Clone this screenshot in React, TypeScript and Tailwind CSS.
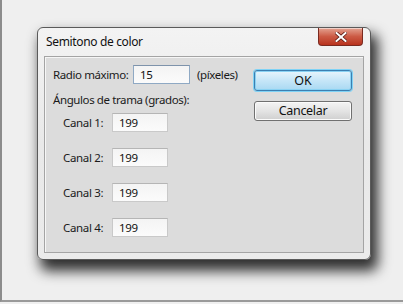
const font = "font-['Segoe_UI','Noto_Sans',sans-serif]"

function Field({ value, focused }: { value: string; focused?: boolean }) {
  return (
    <div
      className={
        'flex h-[19px] items-center border bg-gradient-to-b from-[#f4f4f4] to-[#fbfbfb] pl-[6px] text-[11.5px] leading-[16px] tracking-[-0.3px] text-[#111] ' +
        (focused ? 'border-[#8fa9c4] border-t-[#7e93ab]' : 'border-[#c9c9c9] border-t-[#b5b5b5]')
      }
    >
      {value}
    </div>
  )
}

function Channel({ n }: { n: number }) {
  return (
    <div className="flex h-[19px] items-center">
      <span className="w-[67px] shrink-0 whitespace-nowrap pl-[18px] text-[11.5px] leading-[16px] tracking-[-0.35px] text-[#1a1a1a]">Canal {n}:</span>
      <div className="w-[56px] shrink-0">
        <Field value="199" />
      </div>
    </div>
  )
}

export default function App() {
  return (
    <div className={'h-[304px] w-[403px] overflow-hidden bg-[#f0f0f0] ' + font}>
      <div className="flex h-[302px] border-l-[2px] border-b-[2px] border-l-[#8c8c8c] border-b-[#9a9a9a] bg-[#efefef] pl-[35px] pt-[27px]">
        {/* ventana del diálogo */}
        <div className="flex h-[233px] w-[334px] flex-col rounded-[6px] border border-[#5a5a5a] bg-gradient-to-b from-[#f3f3f3] via-[#e9e9e9] to-[#ebebeb] px-[6px] pb-[6px] shadow-[5px_9px_13px_2px_rgba(0,0,0,0.8)]">
          <div className="flex h-[28px] shrink-0 items-start justify-between">
            <span className="whitespace-nowrap pl-[2px] pt-[6px] text-[12px] leading-[16px] tracking-[-0.35px] text-[#111]">Semitono de color</span>
            <div className="mr-[1px] flex h-[18px] w-[45px] items-center justify-center rounded-b-[4px] border border-t-0 border-[#7a2a20] bg-gradient-to-b from-[#e3a291] via-[#cc5a44] to-[#b8321d] shadow-[inset_0_1px_0_rgba(255,255,255,0.5)]">
              <svg width="12" height="10" viewBox="0 0 12 10">
                <path d="M1.5 1 L10.5 9 M10.5 1 L1.5 9" stroke="#5a1a12" strokeWidth="3.6" strokeLinecap="square" />
                <path d="M1.5 1 L10.5 9 M10.5 1 L1.5 9" stroke="#ffffff" strokeWidth="2" strokeLinecap="square" />
              </svg>
            </div>
          </div>
          {/* área cliente */}
          <div className="flex min-h-0 flex-1 border border-[#a4a4a4] bg-[#dcdcdc] shadow-[inset_1px_1px_0_#f6f6f6]">
            <div className="flex w-[208px] shrink-0 flex-col pt-[8px]">
              <div className="flex h-[19px] items-center">
                <span className="w-[88px] shrink-0 whitespace-nowrap pl-[8px] text-[11.5px] leading-[16px] tracking-[-0.4px] text-[#1a1a1a]">Radio máximo:</span>
                <div className="w-[57px] shrink-0">
                  <Field value="15" focused />
                </div>
                <span className="whitespace-nowrap pl-[7px] text-[11.5px] leading-[16px] tracking-[-0.4px] text-[#1a1a1a]">(píxeles)</span>
              </div>
              <div className="mt-[8px] h-[16px] whitespace-nowrap pl-[8px] text-[11.5px] leading-[16px] tracking-[-0.4px] text-[#1a1a1a]">Ángulos de trama (grados):</div>
              <div className="mt-[5px] flex flex-col gap-[16px]">
                <Channel n={1} />
                <Channel n={2} />
                <Channel n={3} />
                <Channel n={4} />
              </div>
            </div>
            <div className="flex flex-col gap-[10px] pl-[1px] pt-[13px]">
              <div className="flex h-[21px] w-[98px] items-center justify-center rounded-[3px] border border-[#3c7fb1] bg-gradient-to-b from-[#e8f5fc] via-[#c6e6f8] to-[#a9d9f2] text-[12.5px] leading-[16px] text-[#111] shadow-[0_0_0_1px_#7fd2f5,inset_0_0_0_1px_#8ad2f3]">
                OK
              </div>
              <div className="flex h-[20px] w-[98px] items-center justify-center rounded-[3px] border border-[#707070] bg-gradient-to-b from-[#f4f4f4] via-[#e4e4e4] to-[#cfcfcf] text-[12.5px] leading-[16px] tracking-[-0.3px] text-[#111] shadow-[inset_0_0_0_1px_#fbfbfb]">
                Cancelar
              </div>
            </div>
          </div>
        </div>
      </div>
    </div>
  )
}
